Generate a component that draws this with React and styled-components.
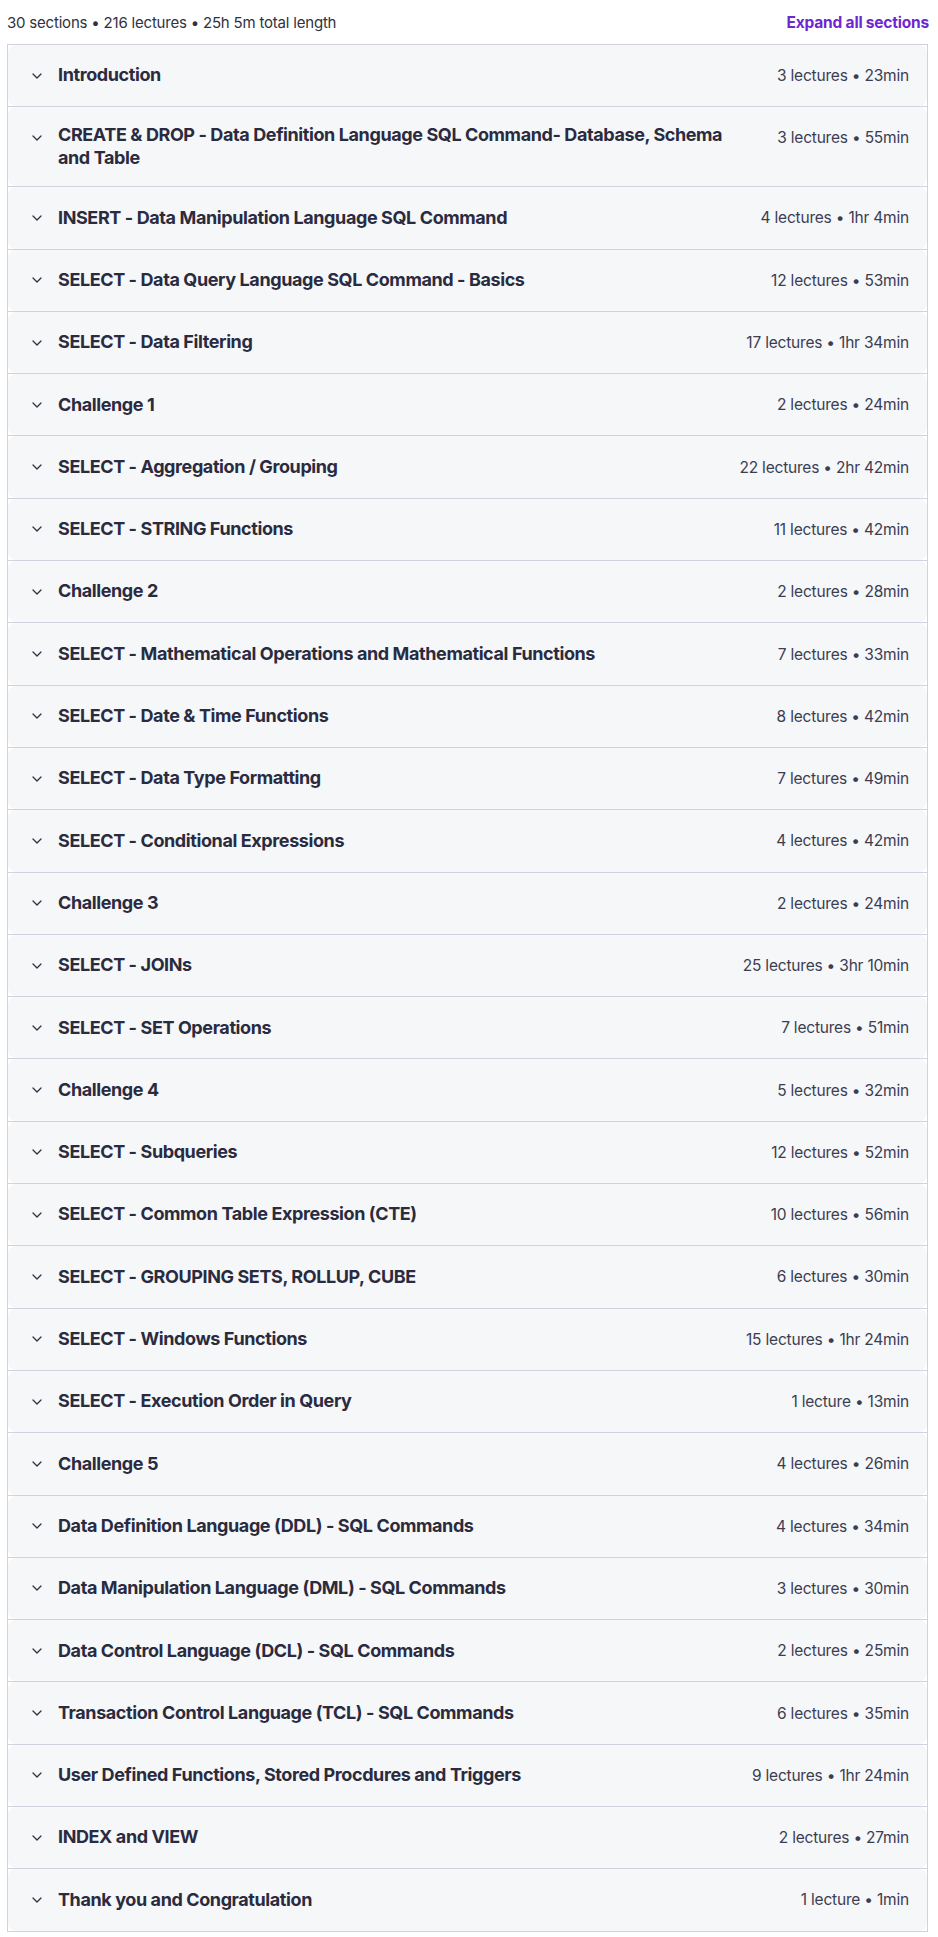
import React from 'react';
import styled, { createGlobalStyle } from 'styled-components';

const sections = [
  ['Introduction', '3 lectures • 23min'],
  ['CREATE & DROP - Data Definition Language SQL Command- Database, Schema and Table', '3 lectures • 55min'],
  ['INSERT - Data Manipulation Language SQL Command', '4 lectures • 1hr 4min'],
  ['SELECT - Data Query Language SQL Command - Basics', '12 lectures • 53min'],
  ['SELECT - Data Filtering', '17 lectures • 1hr 34min'],
  ['Challenge 1', '2 lectures • 24min'],
  ['SELECT - Aggregation / Grouping', '22 lectures • 2hr 42min'],
  ['SELECT - STRING Functions', '11 lectures • 42min'],
  ['Challenge 2', '2 lectures • 28min'],
  ['SELECT - Mathematical Operations and Mathematical Functions', '7 lectures • 33min'],
  ['SELECT - Date & Time Functions', '8 lectures • 42min'],
  ['SELECT - Data Type Formatting', '7 lectures • 49min'],
  ['SELECT - Conditional Expressions', '4 lectures • 42min'],
  ['Challenge 3', '2 lectures • 24min'],
  ['SELECT - JOINs', '25 lectures • 3hr 10min'],
  ['SELECT - SET Operations', '7 lectures • 51min'],
  ['Challenge 4', '5 lectures • 32min'],
  ['SELECT - Subqueries', '12 lectures • 52min'],
  ['SELECT - Common Table Expression (CTE)', '10 lectures • 56min'],
  ['SELECT - GROUPING SETS, ROLLUP, CUBE', '6 lectures • 30min'],
  ['SELECT - Windows Functions', '15 lectures • 1hr 24min'],
  ['SELECT - Execution Order in Query', '1 lecture • 13min'],
  ['Challenge 5', '4 lectures • 26min'],
  ['Data Definition Language (DDL) - SQL Commands', '4 lectures • 34min'],
  ['Data Manipulation Language (DML) - SQL Commands', '3 lectures • 30min'],
  ['Data Control Language (DCL) - SQL Commands', '2 lectures • 25min'],
  ['Transaction Control Language (TCL) - SQL Commands', '6 lectures • 35min'],
  ['User Defined Functions, Stored Procdures and Triggers', '9 lectures • 1hr 24min'],
  ['INDEX and VIEW', '2 lectures • 27min'],
  ['Thank you and Congratulation', '1 lecture • 1min'],
];

const GlobalStyle = createGlobalStyle`
  body {
    margin: 0;
    background: #fff;
    font-family: Inter, "Noto Sans", sans-serif;
    color: #2d2f31;
  }
`;

const Page = styled.div`
  padding: 0 10px 0 7px;
`;

const TopBar = styled.div`
  display: flex;
  align-items: center;
  justify-content: space-between;
  height: 44px;
  margin-right: -1px;
`;

const Summary = styled.span`
  font-size: 15px;
  letter-spacing: -0.2px;
  color: #303141;
`;

const ExpandLink = styled.button`
  border: none;
  background: none;
  padding: 0;
  font-family: inherit;
  font-size: 15.5px;
  letter-spacing: -0.2px;
  font-weight: 700;
  color: #6d28d2;
  cursor: pointer;
`;

const Curriculum = styled.div`
  border: 1px solid #d1d2e0;
  border-bottom: none;
`;

const Section = styled.div`
  border-bottom: 1px solid #d1d2e0;
  background: #fff;
`;

const Header = styled.div`
  display: flex;
  align-items: flex-start;
  padding: 17px 18px 17px 24px;
  background: #f6f7f9;
  border-radius: 8px;
`;

const Chevron = styled.span`
  display: flex;
  align-items: center;
  height: 27.3px;
  width: 10px;
  margin-right: 16px;
  color: #303141;
  flex-shrink: 0;
`;

const Title = styled.h3`
  flex: 1;
  display: flex;
  align-items: center;
  min-height: 27.3px;
  margin: 0;
  font-size: 18px;
  letter-spacing: -0.4px;
  line-height: 22.5px;
  font-weight: 700;
  color: #2a2b3f;
`;

const Meta = styled.span`
  display: flex;
  align-items: center;
  height: 27.3px;
  margin-left: 48px;
  font-size: 15.5px;
  letter-spacing: -0.2px;
  color: #3b3d52;
  white-space: nowrap;
  flex-shrink: 0;
`;

const ChevronIcon = () => (
  <svg width="10" height="6" viewBox="0 0 10 6" fill="none">
    <path d="M1 1l4 4 4-4" stroke="currentColor" strokeWidth="1.3" strokeLinecap="round" strokeLinejoin="round" />
  </svg>
);

export default function App() {
  return (
    <Page>
      <GlobalStyle />
      <TopBar>
        <Summary>30 sections • 216 lectures • 25h 5m total length</Summary>
        <ExpandLink>Expand all sections</ExpandLink>
      </TopBar>
      <Curriculum>
        {sections.map(([title, meta]) => (
          <Section key={title}>
            <Header>
              <Chevron><ChevronIcon /></Chevron>
              <Title>{title}</Title>
              <Meta>{meta}</Meta>
            </Header>
          </Section>
        ))}
      </Curriculum>
    </Page>
  );
}
